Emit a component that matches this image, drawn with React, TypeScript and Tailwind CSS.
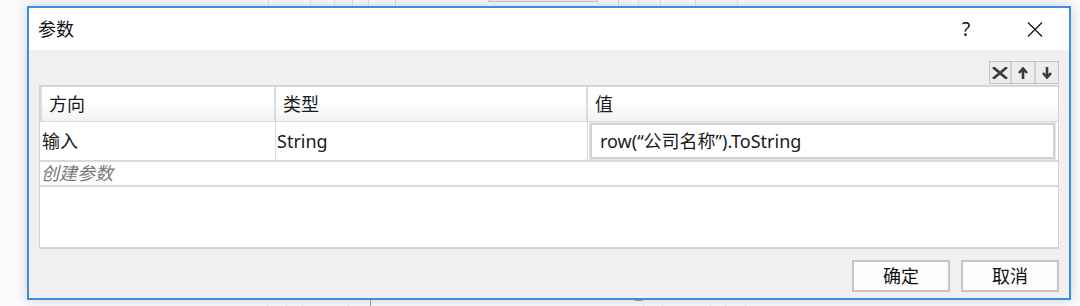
import React from 'react';

const font = { fontFamily: '"Noto Sans", "Noto Sans CJK SC", sans-serif' };

const CloseIcon = () => (
  <svg width="16" height="15" viewBox="0 0 16 15">
    <path d="M1 0.5 L15 14.5 M15 0.5 L1 14.5" stroke="#1a1a1a" strokeWidth="1.3" />
  </svg>
);

const ToolX = () => (
  <svg width="16" height="12" viewBox="0 0 16 12">
    <path d="M2 1 L14 11 M14 1 L2 11" stroke="#3a3a3a" strokeWidth="2.6" strokeLinecap="square" />
  </svg>
);

const ToolUp = () => (
  <svg width="10" height="12" viewBox="0 0 10 12">
    <path d="M5 2 V12" stroke="#3a3a3a" strokeWidth="2.6" />
    <path d="M1 6 L5 1.5 L9 6" stroke="#3a3a3a" strokeWidth="2.6" fill="none" />
  </svg>
);

const ToolDown = () => (
  <svg width="10" height="12" viewBox="0 0 10 12">
    <path d="M5 0 V10" stroke="#3a3a3a" strokeWidth="2.6" />
    <path d="M1 6 L5 10.5 L9 6" stroke="#3a3a3a" strokeWidth="2.6" fill="none" />
  </svg>
);

const App: React.FC = () => {
  return (
    <div className="w-[1080px] h-[306px] bg-[#fbfbfb] overflow-hidden flex flex-col" style={font}>
      {/* app behind the dialog, top edge */}
      <div className="h-[6px] flex shrink-0">
        <div className="w-[268px]" />
        <div className="w-px bg-[#e2e2e2]" />
        <div className="w-[41px]" />
        <div className="w-px bg-[#e2e2e2]" />
        <div className="w-[23px]" />
        <div className="w-px bg-[#e2e2e2]" />
        <div className="w-[17px]" />
        <div className="w-px bg-[#e2e2e2]" />
        <div className="w-[15px]" />
        <div className="w-px bg-[#e2e2e2]" />
        <div className="w-[26px]" />
        <div className="w-px bg-[#c9dcef]" />
        <div className="w-[92px]" />
        <div className="w-[110px] h-[2px] border border-t-0 border-[#c8c8c8] bg-[#eeeeee]" />
        <div className="w-[20px]" />
        <div className="w-px bg-[#c9dcef]" />
        <div className="w-[19px]" />
        <div className="w-px bg-[#e2e2e2]" />
        <div className="w-[21px]" />
        <div className="w-px bg-[#e2e2e2]" />
        <div className="w-[34px]" />
        <div className="w-px bg-[#e2e2e2]" />
        <div className="w-[41px]" />
        <div className="w-px bg-[#e2e2e2]" />
      </div>

      <div className="h-[294px] shrink-0 pl-[27px]">
        <div className="w-[1044px] h-[294px] border-2 border-[#3a8fe2] bg-[#f0f0f0] flex flex-col shadow-[0_0_12px_rgba(0,0,0,0.18)]">
          {/* title bar */}
          <div className="h-[42px] bg-white flex items-center shrink-0">
            <div className="pl-[9px] text-[18px] text-[#111] leading-none">参数</div>
            <div className="flex-1" />
            <div className="w-[20px] text-[19px] text-[#111] leading-none text-center mr-[51px]">?</div>
            <div className="mr-[26px] flex items-center">
              <CloseIcon />
            </div>
          </div>

          {/* body */}
          <div className="flex-1 flex flex-col px-[10px] pt-[11px]">
            <div className="flex justify-end h-[23px] shrink-0">
              <div className="flex border border-[#c4c4c4]">
                <div className="w-[22px] h-full border-r-2 border-[#d0d0d0] bg-[#ededed] flex items-center justify-center">
                  <ToolX />
                </div>
                <div className="w-[24px] h-full border-r-2 border-[#d0d0d0] bg-[#ededed] flex items-center justify-center">
                  <ToolUp />
                </div>
                <div className="w-[22px] h-full bg-[#ededed] flex items-center justify-center">
                  <ToolDown />
                </div>
              </div>
            </div>

            {/* grid */}
            <div className="mt-[1px] h-[164px] border border-b-2 border-[#d3d3d3] bg-white flex flex-col text-[18px] text-[#1a1a1a]">
              <div className="h-[36px] grid grid-cols-[236px_312px_1fr] border-t border-b border-[#d9d9d9] shrink-0">
                <div className="border-l-2 border-r-2 border-[#dcdcdc] bg-gradient-to-b from-white from-45% to-[#f1f2f3] flex items-center pl-[7px]">
                  方向
                </div>
                <div className="border-r-2 border-[#dcdcdc] bg-gradient-to-b from-white from-45% to-[#f1f2f3] flex items-center pl-[7px]">
                  类型
                </div>
                <div className="bg-gradient-to-b from-white from-45% to-[#f1f2f3] flex items-center pl-[7px]">
                  值
                </div>
              </div>
              <div className="h-[40px] grid grid-cols-[236px_312px_1fr] border-b-2 border-[#dadada] shrink-0">
                <div className="border-r border-[#dadada] flex items-center pl-[2px]">输入</div>
                <div className="border-r border-[#dadada] flex items-center pl-[1px]">String</div>
                <div className="pl-[2px] pr-[3px] py-[1px]">
                  <div className="h-full border-2 border-[#d2d2d2] ring-1 ring-[#e6e6e6] flex items-center pl-[8px]">
                    row(“公司名称”).ToString
                  </div>
                </div>
              </div>
              <div className="h-[25px] border-b-2 border-[#dadada] flex items-center pl-[1px] italic text-[#7a7a7a] shrink-0">
                创建参数
              </div>
              <div className="flex-1" />
            </div>

            {/* buttons */}
            <div className="mt-[11px] flex justify-end gap-[11px]">
              <button className="w-[98px] h-[32px] border-2 border-[#c6c6c6] bg-[#fdfdfd] text-[18px] text-[#111] flex items-center justify-center">
                确定
              </button>
              <button className="w-[98px] h-[32px] border-2 border-[#c6c6c6] bg-[#fdfdfd] text-[18px] text-[#111] flex items-center justify-center">
                取消
              </button>
            </div>
          </div>
        </div>
      </div>

      {/* app behind the dialog, bottom edge */}
      <div className="h-[6px] flex shrink-0">
        <div className="w-[267px]" />
        <div className="w-px bg-[#e2e2e2]" />
        <div className="w-[18px]" />
        <div className="w-px bg-[#e2e2e2]" />
        <div className="w-[15px]" />
        <div className="w-px bg-[#e2e2e2]" />
        <div className="w-[45px]" />
        <div className="w-px bg-[#e2e2e2]" />
        <div className="w-[21px]" />
        <div className="w-px bg-[#9a9a9a]" />
        <div className="w-[19px]" />
        <div className="w-[245px]" />
        <div className="w-[7px] border-t border-[#999]" />
        <div className="w-[1px]" />
        <div className="w-px bg-[#e2e2e2]" />
        <div className="w-[18px]" />
        <div className="w-px bg-[#e2e2e2]" />
        <div className="w-[47px]" />
        <div className="w-px bg-[#e2e2e2]" />
        <div className="w-[14px]" />
        <div className="w-px bg-[#e2e2e2]" />
        <div className="w-[19px]" />
        <div className="w-px bg-[#e2e2e2]" />
      </div>
    </div>
  );
};

export default App;
